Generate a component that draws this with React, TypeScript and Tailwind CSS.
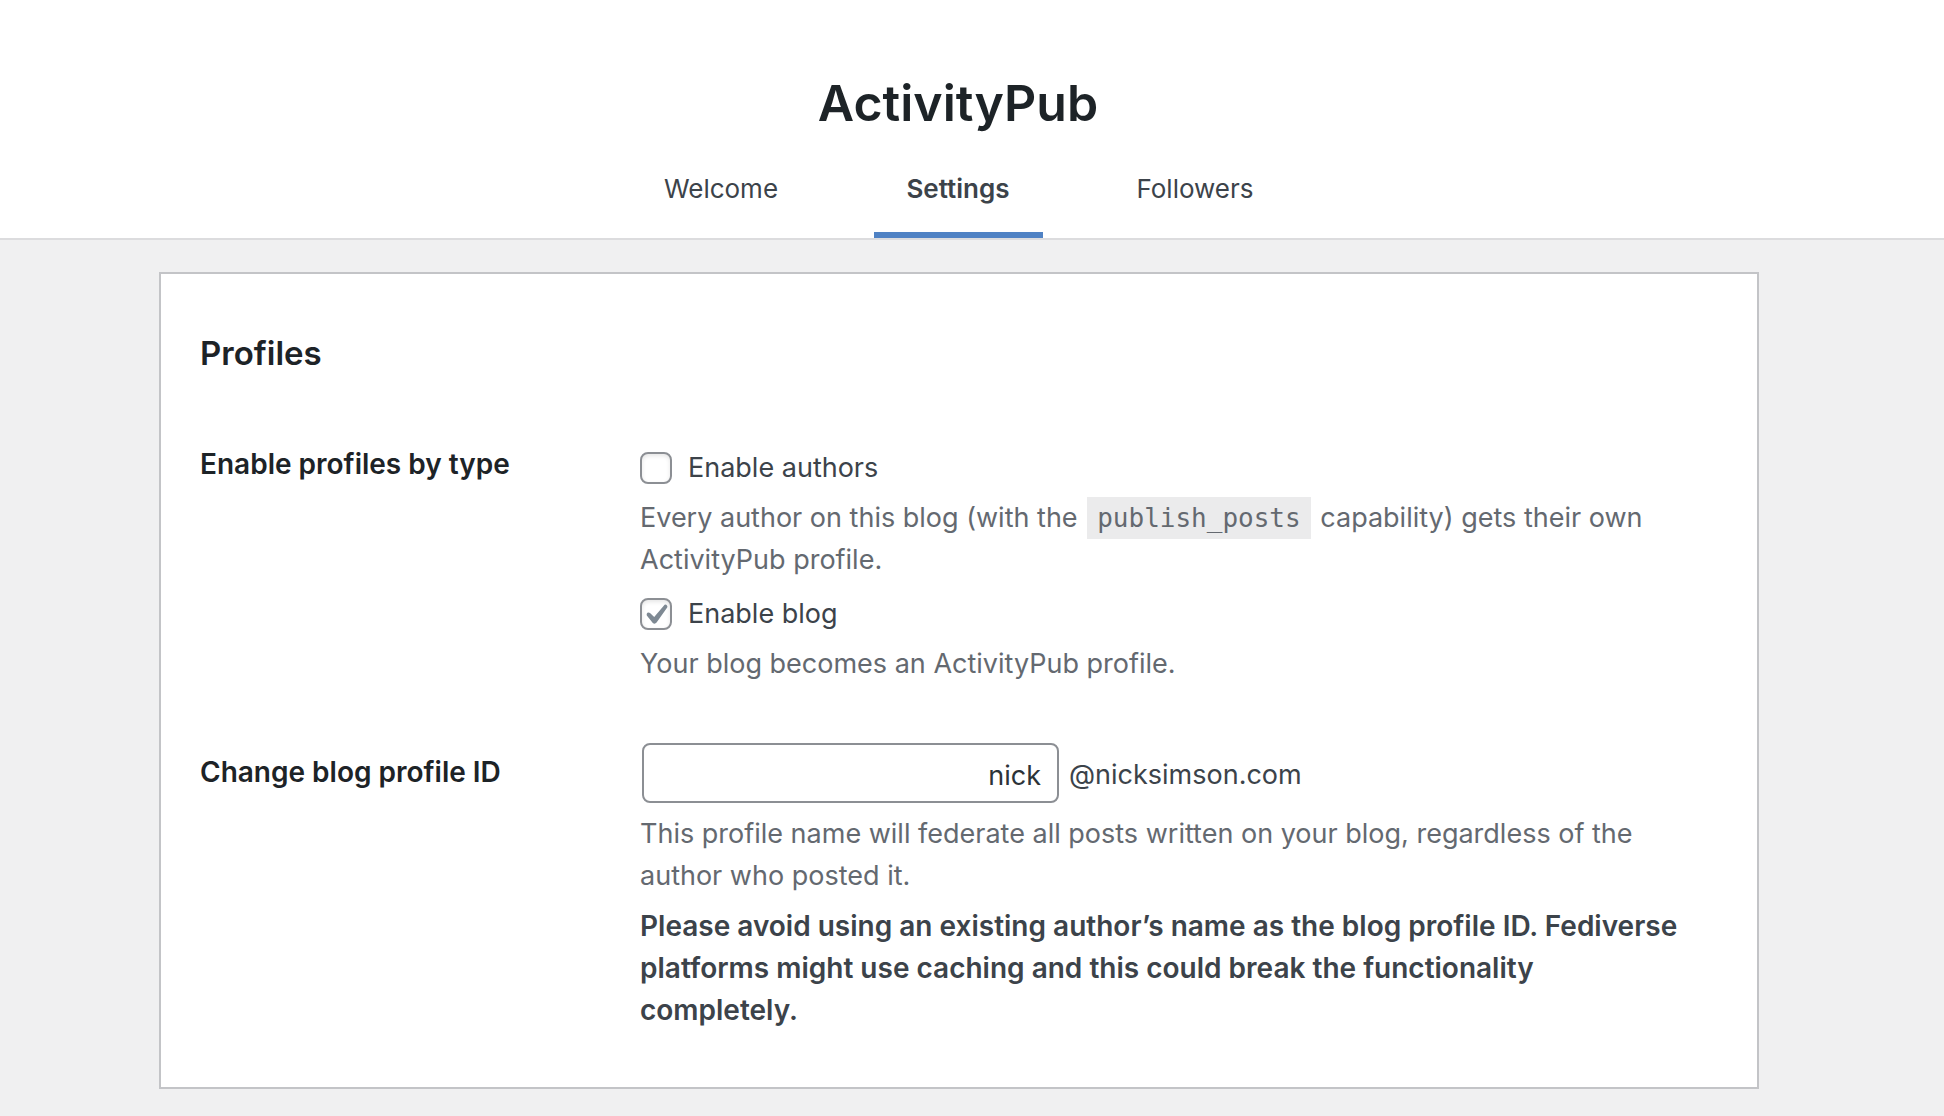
import { useState } from "react";

const tabs = ["Welcome", "Settings", "Followers"];

function Check({ id, label, initial }: { id: string; label: string; initial: boolean }) {
  const [on, setOn] = useState(initial);
  return (
    <div className="flex items-center gap-4">
      <span className="relative flex h-8 w-8">
        <input
          id={id}
          type="checkbox"
          checked={on}
          onChange={() => setOn(!on)}
          className="h-8 w-8 appearance-none rounded-lg border-2 border-[#8c8f94] bg-white shadow-[inset_0_2px_4px_rgba(0,0,0,0.1)]"
        />
        {on && (
          <svg viewBox="0 0 32 32" className="pointer-events-none absolute inset-0 h-8 w-8" fill="#7e8993">
            <path d="M24.6 6.8 Q26 6.2 27 7.4 Q27.8 8.4 27.2 9.4 L16.6 24.6 Q14.8 26.6 12.8 25 L6.8 17.6 Q6.2 16 7.4 14.8 Q8.8 14 10 15 L14.2 19 Z" />
          </svg>
        )}
      </span>
      <label htmlFor={id}>{label}</label>
    </div>
  );
}

export default function App() {
  return (
    <div className="min-h-screen bg-[#f0f0f1] font-['Inter',sans-serif] text-[27px] leading-[42px] text-[#3c434a]">
      <header className="border-b-2 border-[#dcdcde] bg-white pr-7">
        <h1 className="pt-[70px] text-center text-[50px] font-semibold leading-[66px] text-[#1d2327]">ActivityPub</h1>
        <nav className="mx-auto mt-4 grid w-[711px] grid-cols-3 text-[26px] leading-[38px]">
          {tabs.map((t) => (
            <a
              key={t}
              href="#"
              aria-current={t === "Settings" ? "page" : undefined}
              className={
                t === "Settings"
                  ? "mx-[34px] border-b-6 border-[#4f82c4] pt-[18px] pb-6 text-center font-semibold"
                  : "pt-[18px] pb-6 text-center"
              }
            >
              {t}
            </a>
          ))}
        </nav>
      </header>
      <main className="mt-8 mr-[185px] ml-[159px] border-2 border-[#c3c4c7] bg-white px-[39px] py-14">
        <h2 className="text-[33px] font-semibold leading-[46px] text-[#1d2327]">Profiles</h2>
        <section className="mt-[67px] grid grid-cols-[440px_1fr]">
          <h3 className="text-[28px] font-semibold text-[#1d2327]">Enable profiles by type</h3>
          <div className="pt-1 pr-8">
            <Check id="authors" label="Enable authors" initial={false} />
            <p className="mt-2 mb-3 text-[#646970]">
              Every author on this blog (with the{" "}
              <code className="mx-[2px] bg-[#ebebec] px-[10px] py-[6px] font-['DejaVu_Sans_Mono',monospace] text-[26px] leading-[30px]">
                publish_posts
              </code>{" "}
              capability) gets their own ActivityPub profile.
            </p>
            <Check id="blog" label="Enable blog" initial={true} />
            <p className="mt-2 text-[#646970]">Your blog becomes an ActivityPub profile.</p>
          </div>
        </section>
        <section className="mt-[58px] grid grid-cols-[440px_1fr]">
          <h3 className="pt-2 text-[28px] font-semibold text-[#1d2327]">
            <label htmlFor="pid">Change blog profile ID</label>
          </h3>
          <div className="pr-8">
            <div className="flex items-center gap-[10px] pl-[2px]">
              <input
                id="pid"
                defaultValue="nick"
                className="h-[60px] w-[417px] rounded-lg border-2 border-[#8c8f94] bg-white px-4 pt-1 text-right text-[#2c3338]"
              />
              <span className="pt-1">@nicksimson.com</span>
            </div>
            <p className="mt-[10px] text-[#646970]">
              This profile name will federate all posts written on your blog, regardless of the author who posted it.
            </p>
            <p className="mt-2 text-[28px] font-semibold">
              Please avoid using an existing author’s name as the blog profile ID. Fediverse platforms might use caching
              and this could break the functionality completely.
            </p>
          </div>
        </section>
      </main>
    </div>
  );
}
